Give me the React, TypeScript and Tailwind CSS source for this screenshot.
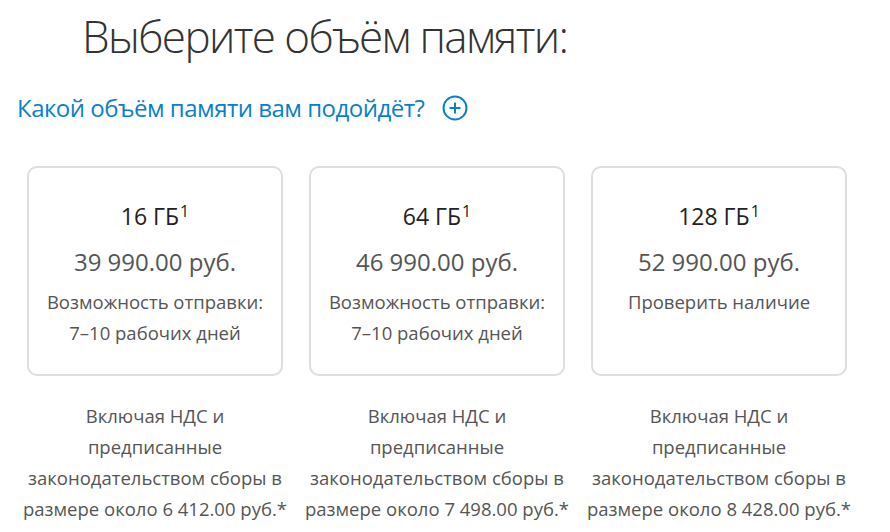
import React from "react";

const cards = [
  { size: "16 ГБ", price: "39 990.00 руб.", desc: ["Возможность отправки:", "7–10 рабочих дней"], tax: "6 412.00" },
  { size: "64 ГБ", price: "46 990.00 руб.", desc: ["Возможность отправки:", "7–10 рабочих дней"], tax: "7 498.00" },
  { size: "128 ГБ", price: "52 990.00 руб.", desc: ["Проверить наличие"], tax: "8 428.00" },
];

export default function App() {
  return (
    <div
      className="w-[890px] h-[532px] bg-white overflow-hidden text-[#333]"
      style={{ fontFamily: '"Open Sans", "Noto Sans", sans-serif' }}
    >
      <h1 className="pl-[82px] pt-[8px] text-[44px] leading-[56px] font-light tracking-[-1.6px] text-[#333]">
        Выберите объём памяти:
      </h1>
      <div className="pl-[17px] mt-[29px] flex items-center gap-[18px] text-[#0a80cb]">
        <span className="text-[24px] leading-[30px] tracking-[-0.5px]">Какой объём памяти вам подойдёт?</span>
        <svg width="26" height="26" viewBox="0 0 26 26" fill="none" stroke="#0a80cb" strokeWidth="2">
          <circle cx="13" cy="13" r="11.5" />
          <path d="M13 7.5v11M7.5 13h11" />
        </svg>
      </div>
      <div className="pl-[27px] mt-[43px] flex gap-[26px]">
        {cards.map((c) => (
          <div key={c.size} className="w-[256px] flex flex-col items-center">
            <div className="w-full h-[210px] border-2 border-[#dedede] rounded-[10px] flex flex-col items-center pt-[32px]">
              <div className="text-[23px] leading-[32px] text-[#222]">
                {c.size}
                <sup className="text-[16px] relative top-[-8px] ml-[1px]">1</sup>
              </div>
              <div className="mt-[14px] text-[24px] leading-[32px] text-[#555]">{c.price}</div>
              <div className="mt-[8px] text-[18.5px] leading-[31px] text-[#555] text-center">
                {c.desc.map((d) => (
                  <div key={d}>{d}</div>
                ))}
              </div>
            </div>
            <div className="mt-[24px] w-[300px] text-center text-[18.5px] leading-[31px] text-[#555]">
              <div>Включая НДС и</div>
              <div>предписанные</div>
              <div>законодательством сборы в</div>
              <div>размере около {c.tax} руб.*</div>
            </div>
          </div>
        ))}
      </div>
    </div>
  );
}
